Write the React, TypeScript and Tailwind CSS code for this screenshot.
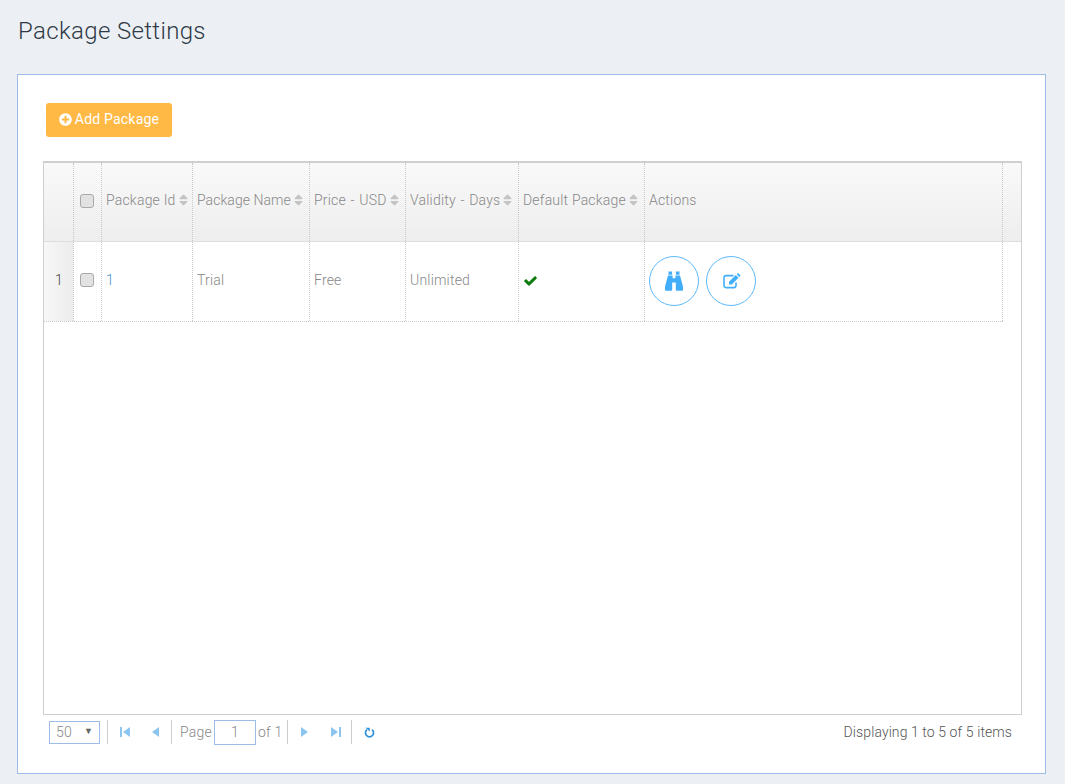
import { FaCheck, FaPlusCircle, FaSort } from 'react-icons/fa'

const font = "font-['Roboto','Liberation_Sans',sans-serif]"

const columns = [
  { label: 'Package Id', width: 'w-[91px]', text: '' },
  { label: 'Package Name', width: 'w-[117px]', text: 'tracking-[0.05px]' },
  { label: 'Price - USD', width: 'w-[96px]', text: '[word-spacing:1px]' },
  { label: 'Validity - Days', width: 'w-[113px]', text: '[word-spacing:1px]' },
  { label: 'Default Package', width: 'w-[126px]', text: '' },
]

function Checkbox() {
  return <span className="block h-[14px] w-[14px] rounded-[3px] border border-[#a9a9a9] bg-[#e2e2e2]" />
}

function Divider({ className }: { className: string }) {
  return <span className={`${className} block h-[24px] w-px bg-[#ccc]`} />
}

function PagerIcon({ d, bar, className }: { d: string; bar?: number; className: string }) {
  return (
    <svg width="12" height="12" viewBox="0 0 12 12" className={`${className} fill-[#8cc6f0]`}>
      <path d={d} />
      {bar !== undefined && <rect x={bar} y="1" width="2" height="10" />}
    </svg>
  )
}

function BinocularsIcon() {
  return (
    <svg width="18" height="20" viewBox="0 0 18 20" fill="#42aefb">
      <path d="M3.5 0.5h3.6v3.2H3.5zM10.9 0.5h3.6v3.2h-3.6z" />
      <path d="M3 4.6h4.6v2.6h2.8V4.6H15l3 11v3.4a0.8 0.8 0 0 1-0.8 0.8h-5.6a0.8 0.8 0 0 1-0.8-0.8v-7.6H7.2V19a0.8 0.8 0 0 1-0.8 0.8H0.8A0.8 0.8 0 0 1 0 19v-3.4z" />
    </svg>
  )
}

function EditIcon() {
  return (
    <svg width="18" height="16" viewBox="0 0 18 16">
      <path
        d="M13 9.5v3A2.2 2.2 0 0 1 10.8 14.6H3.2A2.2 2.2 0 0 1 1 12.4V4.8A2.2 2.2 0 0 1 3.2 2.6h7.3"
        fill="none"
        stroke="#42aefb"
        strokeWidth="1.6"
      />
      <path d="M6 8.8L12.8 2l2.8 2.8L8.8 11.6H6z" fill="#42aefb" />
      <path d="M13.6 1.2l0.8-0.8a0.8 0.8 0 0 1 1.1 0l1.7 1.7a0.8 0.8 0 0 1 0 1.1l-0.8 0.8z" fill="#42aefb" />
    </svg>
  )
}

export default function App() {
  return (
    <div className={`${font} min-h-screen bg-[#ecf0f5] pl-[17px] pr-[19px] pb-[10px] text-[14px] font-light tracking-[0.2px]`}>
      <h1 className="ml-[1px] flex h-[74px] items-start pt-[15px] text-[24px] leading-[32px] font-light tracking-[0.35px] text-[#2f3a46]">
        Package Settings
      </h1>

      <div className="h-[700px] border border-[#9dbce8] bg-white pl-[25px] pr-[23px] pt-[28px]">
        <button className="ml-[3px] flex h-[34px] w-[126px] items-center justify-center gap-[3px] rounded-[3px] bg-[#ffb944] pb-[2px] text-[14px] font-normal text-white">
          <FaPlusCircle className="h-[13px] w-[13px]" />
          Add Package
        </button>

        <div className="mt-[24px] h-[554px] border border-t-2 border-[#cfcfcf]">
          <div className="flex h-[79px] border-b border-[#dedede] bg-gradient-to-b from-[#f9f9f9] to-[#eeeeee] text-[#888]">
            <div className="w-[30px] border-r border-dotted border-[#c8c8c8]" />
            <div className="flex w-[28px] items-center justify-center border-r border-dotted border-[#c8c8c8] pb-[2px] pr-[2px]">
              <Checkbox />
            </div>
            {columns.map((col) => (
              <div key={col.label} className={`${col.width} ${col.text} flex items-center gap-[2px] whitespace-nowrap border-r border-dotted border-[#c8c8c8] pb-[4px] pl-[4px]`}>
                {col.label}
                <FaSort className="h-[14px] w-[11px] text-[#c4c4c4]" />
              </div>
            ))}
            <div className="flex w-[358px] items-center border-r border-dotted border-[#c8c8c8] pb-[4px] pl-[4px]">Actions</div>
          </div>

          <div className="flex h-[80px] w-[959px] border-b border-dotted border-[#c8c8c8] text-[#888]">
            <div className="flex w-[30px] items-center justify-center border-r border-dotted border-[#c8c8c8] bg-gradient-to-r from-[#f7f7f7] to-[#ececec] pb-[2px] pl-[1px] text-[#444]">
              1
            </div>
            <div className="flex w-[28px] items-center justify-center border-r border-dotted border-[#c8c8c8] pb-[3px] pr-[2px]">
              <Checkbox />
            </div>
            <div className="flex w-[91px] items-center border-r border-dotted border-[#c8c8c8] pb-[2px] pl-[4px] text-[#4a90c8]">1</div>
            <div className="flex w-[117px] items-center border-r border-dotted border-[#c8c8c8] pb-[2px] pl-[4px]">Trial</div>
            <div className="flex w-[96px] items-center border-r border-dotted border-[#c8c8c8] pb-[2px] pl-[4px]">Free</div>
            <div className="flex w-[113px] items-center border-r border-dotted border-[#c8c8c8] pb-[2px] pl-[4px]">Unlimited</div>
            <div className="flex w-[126px] items-center border-r border-dotted border-[#c8c8c8] pb-[2px] pl-[5px]">
              <FaCheck className="h-[12px] w-[13px] text-[#0a7a0a]" stroke="currentColor" strokeWidth="30" />
            </div>
            <div className="flex w-[358px] items-center gap-[7px] border-r border-dotted border-[#c8c8c8] pb-[1px] pl-[4px]">
              <span className="flex h-[50px] w-[50px] items-center justify-center rounded-full border border-[#5bb8fb]">
                <BinocularsIcon />
              </span>
              <span className="flex h-[50px] w-[50px] items-center justify-center rounded-full border border-[#5bb8fb] pl-[2px]">
                <EditIcon />
              </span>
            </div>
          </div>
        </div>

        <div className="flex h-[34px] items-center text-[#888]">
          <div className="ml-[6px] flex h-[23px] w-[51px] items-center justify-between border border-[#9dbce8] pl-[6px] pr-[6px]">
            50
            <span className="text-[9px] text-[#666]">▼</span>
          </div>
          <Divider className="ml-[7px]" />
          <PagerIcon className="ml-[11px]" d="M11 1v10L4 6z" bar={1} />
          <PagerIcon className="ml-[19px]" d="M9 1v10L2 6z" />
          <Divider className="ml-[9px]" />
          <span className="ml-[8px]">Page</span>
          <span className="ml-[2px] flex h-[25px] w-[42px] items-center justify-center border border-[#9dbce8]">1</span>
          <span className="ml-[2px]">of 1</span>
          <Divider className="ml-[5px]" />
          <PagerIcon className="ml-[10px]" d="M3 1v10L10 6z" />
          <PagerIcon className="ml-[20px]" d="M1 1v10L8 6z" bar={9} />
          <Divider className="ml-[9px]" />
          <svg width="11" height="13" viewBox="0 0 12 13" className="ml-[12px]">
            <path d="M8.8 3.4A4.4 4.4 0 1 1 3.2 3.4" fill="none" stroke="#2a8fd8" strokeWidth="1.8" />
            <path d="M1.8 1.2h4.4v4.2z" fill="#2a8fd8" />
          </svg>
          <span className="ml-auto mr-[10px] tracking-[0.09px] text-[#555]">Displaying 1 to 5 of 5 items</span>
        </div>
      </div>
    </div>
  )
}
